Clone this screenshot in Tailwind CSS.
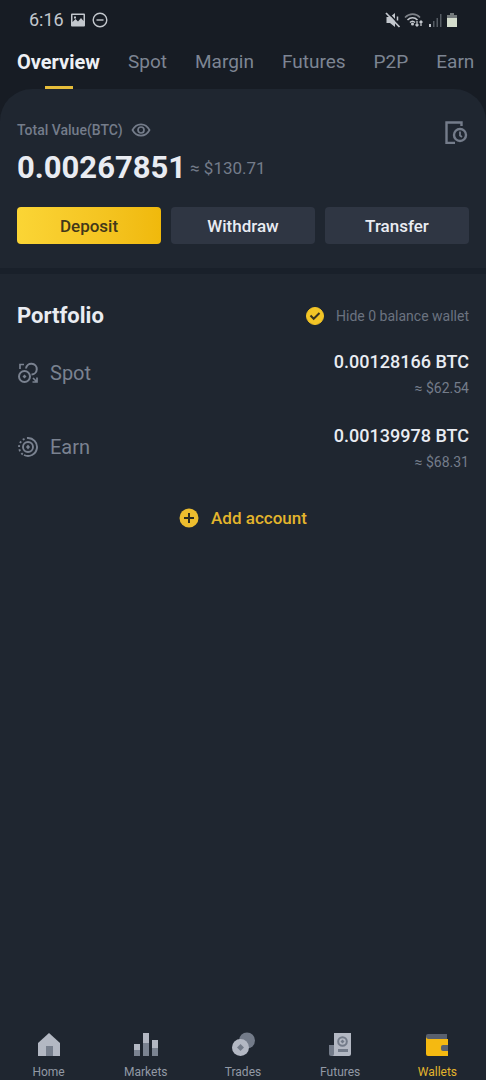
<!DOCTYPE html>
<html lang="en">
<head>
<meta charset="utf-8">
<meta name="viewport" content="width=device-width, initial-scale=1">
<title>Wallets</title>
<script src="https://cdn.jsdelivr.net/npm/@tailwindcss/browser@4"></script>
</head>
<body class="bg-[#171c24] font-['Roboto',sans-serif] text-[#e9ecf2]">
<div class="flex min-h-screen flex-col">
  <header>
    <div class="flex h-10 items-center justify-between pr-7 pl-[29px] text-[#c3c7cd]">
      <div class="flex items-center gap-[6px]">
        <span class="text-lg leading-6">6:16</span>
        <svg class="h-4 w-4" viewBox="0 0 16 16" aria-hidden="true"><path fill="currentColor" fill-rule="evenodd" d="M2 1.5h12a1 1 0 0 1 1 1v11a1 1 0 0 1-1 1H2a1 1 0 0 1-1-1v-11a1 1 0 0 1 1-1zM2.5 3v7l3-3 2.500 2.500L11 6l2.500 3V3zM4 4.500h2v2H4z"/></svg>
        <svg class="h-4 w-4" viewBox="0 0 16 16" fill="none" stroke="currentColor" stroke-width="1.400" aria-hidden="true"><circle cx="8" cy="8" r="6.800"/><path d="M4.500 8h7"/></svg>
      </div>
      <div class="flex items-center gap-[3px]">
        <svg class="h-4 w-4" viewBox="0 0 16 16" aria-hidden="true"><path fill="currentColor" d="M1.500 5h3.500l5-4v14l-5-4H1.500z"/><path d="M2.500 0l14 15" stroke="#171c24" stroke-width="1.500"/><path d="M1 1l13.500 14" stroke="currentColor" stroke-width="1.800"/><path d="M12.500 4.500v4" stroke="currentColor" stroke-width="1.500"/></svg>
        <svg class="h-4 w-5" viewBox="0 0 20 16" fill="none" stroke="currentColor" stroke-width="1.600" aria-hidden="true"><path d="M1 5.500c4.500-4.500 11-4.500 15 0" opacity=".6"/><path d="M3.500 8c3-3 7-3 10 0M6 10.500c1.500-1.500 3.500-1.500 5 0"/><circle cx="8.500" cy="12" r=".7"/><path stroke-width="1.300" d="M13 9v5m-1.500-1.500L13 14l1.500-1.500M17 14V9m-1.500 1.500L17 9l1.500 1.500"/></svg>
        <svg class="h-4 w-4" viewBox="0 0 16 16" aria-hidden="true"><path fill="currentColor" d="M2 12h2v3H2z"/><path fill="#555b63" d="M6 9h1.500v6H6zM9.500 6H11v9H9.500zM13 2h1.500v13H13z"/></svg>
        <svg class="h-4 w-3" viewBox="0 0 12 16" aria-hidden="true"><path fill="#747a7c" d="M4 1h4v2h3v4H1V3h3z"/><path fill="#d5ddcd" d="M1 6h10v9H1z"/></svg>
      </div>
    </div>
    <nav aria-label="Wallet sections" class="flex gap-7 overflow-hidden pl-[17px] text-[19px] leading-6 text-[#7d8593]">
      <a href="#" aria-current="page" class="flex h-[49px] flex-col items-center justify-between pt-[10px] text-xl leading-6 font-bold text-[#eef0f5]">Overview<span class="h-[3px] w-7 bg-[#e6bd3a]"></span></a>
      <a href="#" class="pt-[10px]">Spot</a>
      <a href="#" class="pt-[10px]">Margin</a>
      <a href="#" class="pt-[10px]">Futures</a>
      <a href="#" class="pt-[10px]">P2P</a>
      <a href="#" class="pt-[10px]">Earn</a>
    </nav>
  </header>

  <main class="flex flex-1 flex-col rounded-t-[32px] bg-[#1f2630]">
    <section class="border-b-[6px] border-[#19202a] px-[17px] pt-[31px] pb-6">
      <div class="flex items-start justify-between">
        <div>
          <div class="flex h-5 items-center gap-2 text-sm font-medium text-[#747c8a]">Total Value(BTC)
            <button type="button" aria-label="Show or hide balance"><svg class="block h-[18px] w-5" viewBox="0 0 20 18" fill="none" stroke="currentColor" stroke-width="1.700"><path d="M1.500 9C5.500 1.500 14.500 1.500 18.500 9c-4 7.500-13 7.500-17 0z"/><circle cx="10" cy="9" r="3"/></svg></button>
          </div>
          <div class="mt-2 flex items-center gap-1">
            <strong class="text-[31px] leading-10 font-bold">0.00267851</strong>
            <span class="text-[17px] leading-6 text-[#747c8a]">≈ $130.71</span>
          </div>
        </div>
        <button type="button" aria-label="Transaction history" class="text-[#747c8a]"><svg class="block h-6 w-6" viewBox="0 0 24 24" fill="none" stroke="currentColor" stroke-width="2.400"><path d="M16.500 6V2.500H1.500V23h8.500"/><circle cx="15" cy="15" r="6"/><path stroke-width="1.800" d="M15 11.500v4l2 1.500"/></svg></button>
      </div>
      <div class="mt-[19px] grid grid-cols-3 gap-[10px] text-[17px] leading-6 font-medium">
        <button type="button" class="h-[37px] rounded bg-linear-to-r from-[#fbd535] to-[#f0b90b] text-[#42371a]">Deposit</button>
        <button type="button" class="h-[37px] rounded bg-[#2f3643]">Withdraw</button>
        <button type="button" class="h-[37px] rounded bg-[#2f3643]">Transfer</button>
      </div>
    </section>

    <section class="px-[17px] pt-7">
      <div class="flex h-7 items-center justify-between">
        <h2 class="text-[22px] leading-7 font-bold">Portfolio</h2>
        <label class="flex items-center gap-3 text-sm leading-5 text-[#6b7380]">
          <span class="grid h-[18px] w-[18px]">
            <input type="checkbox" checked class="peer col-start-1 row-start-1 h-[18px] w-[18px] appearance-none rounded-full border border-[#747c8a] checked:border-[#f3c526] checked:bg-[#f3c526]">
            <svg class="pointer-events-none invisible col-start-1 row-start-1 h-[18px] w-[18px] peer-checked:visible" viewBox="0 0 18 18" fill="none" stroke="#39331f" stroke-width="2" aria-hidden="true"><path d="M4.500 8.500l3.200 3.300L13.500 6"/></svg>
          </span>
          Hide 0 balance wallet
        </label>
      </div>
      <ul class="mt-5">
        <li class="flex h-[74px] items-start justify-between">
          <a href="#" class="flex items-center gap-[11px] pt-[11px] text-xl leading-6 text-[#7a8290]">
            <svg class="h-[22px] w-[22px]" viewBox="0 0 22 22" fill="none" stroke="currentColor" stroke-width="2" aria-hidden="true"><circle cx="7.500" cy="14.500" r="5.500"/><path d="M9 6.500a5.400 5.400 0 1 1 5.500 6"/><path stroke-width="1.700" d="M3 7V2.500h4M15.500 20h4.500V15.500M16 16l4 4"/><path fill="currentColor" stroke="none" d="M7.500 12.500l2 2-2 2-2-2z"/></svg>
            Spot</a>
          <div class="text-right">
            <div class="text-lg leading-6 font-medium">0.00128166 BTC</div>
            <div class="mt-1 text-sm leading-5 text-[#747c8a]">≈ $62.54</div>
          </div>
        </li>
        <li class="flex h-[74px] items-start justify-between">
          <a href="#" class="flex items-center gap-[11px] pt-[11px] text-xl leading-6 text-[#7a8290]">
            <svg class="h-[22px] w-[22px]" viewBox="0 0 22 22" fill="none" stroke="currentColor" stroke-width="1.900" aria-hidden="true"><path d="M10 2a9 9 0 1 1-3 17"/><circle cx="11" cy="11" r="5"/><path stroke-dasharray="2 2.200" d="M7.500 2.800a9 9 0 0 0-1.500 15.700"/><path fill="currentColor" stroke="none" d="M11 8.500l2 2.500-2 2.500L9 11z"/></svg>
            Earn</a>
          <div class="text-right">
            <div class="text-lg leading-6 font-medium">0.00139978 BTC</div>
            <div class="mt-1 text-sm leading-5 text-[#747c8a]">≈ $68.31</div>
          </div>
        </li>
      </ul>
      <div class="mt-2 flex justify-center">
        <button type="button" class="flex items-center gap-3 text-[17px] leading-6 font-medium text-[#e3b52c]">
          <svg class="h-5 w-5" viewBox="0 0 20 20" aria-hidden="true"><circle cx="10" cy="10" r="9.500" fill="#edbd2e"/><path d="M10 5v10M5 10h10" stroke="#2c2b20" stroke-width="2"/></svg>
          Add account</button>
      </div>
    </section>

    <nav aria-label="Main" class="mt-auto grid grid-cols-5 text-xs leading-4 text-[#9299a5]">
      <a href="#" class="flex flex-col items-center gap-[7px]">
        <svg class="h-[26px] w-[26px]" viewBox="0 0 26 26" aria-hidden="true"><path fill="#b3b8c3" d="M13 2l11 10v13H2V12z"/><path fill="#777f8d" d="M10 15h7v10h-7z"/></svg>Home</a>
      <a href="#" class="flex flex-col items-center gap-[7px]">
        <svg class="h-[26px] w-[26px]" viewBox="0 0 26 26" aria-hidden="true"><path fill="#b3b8c3" d="M1 13h6v7H1zM10 2h6v11h-6zM19 9h6v9h-6z"/><path fill="#7b8391" d="M1 19h6v6H1zM10 12h6v13h-6zM19 17h6v8h-6z"/></svg>Markets</a>
      <a href="#" class="flex flex-col items-center gap-[7px]">
        <svg class="h-[26px] w-[26px]" viewBox="0 0 26 26" aria-hidden="true"><circle cx="17" cy="9.500" r="8" fill="#737b89"/><circle cx="10.500" cy="16.500" r="8.500" fill="#b3b8c3"/><path fill="#737b89" d="M10.500 13l3.500 3.500-3.500 3.500L7 16.500z"/></svg>Trades</a>
      <a href="#" class="flex flex-col items-center gap-[7px]">
        <svg class="h-[26px] w-[26px]" viewBox="0 0 26 26" aria-hidden="true"><path fill="#737b89" d="M2 14h6v11H4a2 2 0 0 1-2-2z"/><path fill="#b3b8c3" d="M7 2h17v21a2 2 0 0 1-2 2H5a2 2 0 0 0 2-2z"/><circle cx="15.500" cy="10.500" r="4.300" fill="none" stroke="#737b89" stroke-width="2"/><path fill="#737b89" d="M15.500 8.500l2 2-2 2-2-2zM11 18h10v3H11z"/></svg>Futures</a>
      <a href="#" aria-current="page" class="flex flex-col items-center gap-[7px] text-[#e3b52c]">
        <svg class="h-[26px] w-[26px]" viewBox="0 0 26 26" aria-hidden="true"><path fill="#59606d" d="M2 5a2 2 0 0 1 2-2h19v6H2z"/><path fill="#f5b911" d="M2 5c0 3 2 3 4 3h18v17H4a2 2 0 0 1-2-2z"/><path fill="#59606d" d="M19 14h5v6h-5a2 2 0 0 1-2-2v-2a2 2 0 0 1 2-2z"/></svg>Wallets</a>
    </nav>
  </main>
</div>
</body>
</html>
